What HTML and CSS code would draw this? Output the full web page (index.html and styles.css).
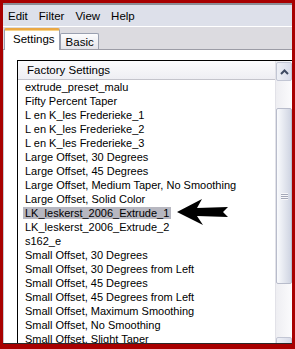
FILE: index.html
```html
<!DOCTYPE html>
<html lang="en">
<head>
    <meta charset="UTF-8">
    <title>Extrude Presets</title>
    <link rel="stylesheet" href="styles.css">
</head>
<body>
    <div class="window">
        <div class="menubar">
            <span class="menu-item">Edit</span>
            <span class="menu-item">Filter</span>
            <span class="menu-item">View</span>
            <span class="menu-item">Help</span>
        </div>
        <div class="tabstrip">
            <div class="tab active">Settings</div>
            <div class="tab">Basic</div>
        </div>
        <div class="panel">
            <div class="listbox">
                <div class="list">
                    <div class="list-head">Factory Settings</div>
                    <ul class="items">
                        <li><span>extrude_preset_malu</span></li>
                        <li><span>Fifty Percent Taper</span></li>
                        <li><span>L en K_les Frederieke_1</span></li>
                        <li><span>L en K_les Frederieke_2</span></li>
                        <li><span>L en K_les Frederieke_3</span></li>
                        <li><span>Large Offset, 30 Degrees</span></li>
                        <li><span>Large Offset, 45 Degrees</span></li>
                        <li><span>Large Offset, Medium Taper, No Smoothing</span></li>
                        <li><span>Large Offset, Solid Color</span></li>
                        <li class="selected"><span>LK_leskerst_2006_Extrude_1</span></li>
                        <li><span>LK_leskerst_2006_Extrude_2</span></li>
                        <li><span>s162_e</span></li>
                        <li><span>Small Offset, 30 Degrees</span></li>
                        <li><span>Small Offset, 30 Degrees from Left</span></li>
                        <li><span>Small Offset, 45 Degrees</span></li>
                        <li><span>Small Offset, 45 Degrees from Left</span></li>
                        <li><span>Small Offset, Maximum Smoothing</span></li>
                        <li><span>Small Offset, No Smoothing</span></li>
                        <li><span>Small Offset, Slight Taper</span></li>
                    </ul>
                </div>
                <div class="scrollbar">
                    <div class="sb-btn">
                        <svg width="9" height="6" viewBox="0 0 9 6"><path d="M1 5 L4.5 1.5 L8 5" fill="none" stroke="#3e4a62" stroke-width="2"/></svg>
                    </div>
                    <div class="sb-track">
                        <div class="thumb">
                            <div class="grip"></div>
                        </div>
                    </div>
                    <div class="sb-btn">
                        <svg width="9" height="6" viewBox="0 0 9 6"><path d="M1 1 L4.5 4.5 L8 1" fill="none" stroke="#3e4a62" stroke-width="2"/></svg>
                    </div>
                </div>
                <!-- pointer arrow drawn over the list -->
                <svg class="pointer" width="54" height="28" viewBox="0 0 54 28">
                    <path d="M1 14 L26 1 L21 10 L52 9 L47 14 L52 19 L21 18 L27 27 Z" fill="#000"/>
                </svg>
            </div>
        </div>
    </div>
</body>
</html>
```

FILE: styles.css
```css
body {
    margin: 0;
    background-color: #a80000;
    font-family: "Liberation Sans", Arial, sans-serif;
    font-size: 11px;
    color: #000;
}
.window {
    position: relative;
    display: flex;
    flex-direction: column;
    width: 289px;
    height: 338px;
    margin: 3px 3px 0 3px;
    border-top: 2px solid #8c8e96;
    border-bottom: 1px solid #2a2a2a;
    background-color: #fff;
    overflow: hidden;
}
.menubar {
    flex: none;
    display: flex;
    align-items: center;
    height: 21px;
    padding-left: 5px;
    background-color: #dde0ea;
    border-bottom: 1px solid #fff;
    font-size: 11.5px;
}
.menu-item {
    margin-right: 11px;
}
.tabstrip {
    flex: none;
    display: flex;
    align-items: flex-end;
    height: 22px;
    padding-left: 1px;
    background-color: #dcdbe0;
    border-bottom: 1px solid #9c9ca6;
    font-size: 11.5px;
}
.tab {
    height: 15px;
    padding: 0 4px 0 5px;
    line-height: 16px;
    background: linear-gradient(#fdfdfe, #e3e3ea);
    border: 1px solid #9aa0b0;
    border-bottom: none;
    border-radius: 2px 2px 0 0;
}
.tab.active {
    position: relative;
    height: 20px;
    line-height: 19px;
    padding: 0 4px 0 8px;
    margin-bottom: -1px;
    background: #fff;
    border-color: #9aa0b0;
    border-top: 2px solid #eaa844;
    box-shadow: inset 0 1px 0 #f7d38a;
}
.panel {
    flex: 1;
    min-height: 0;
    padding: 10px 0 0 13px;
    border-left: 1px solid #c8c8d0;
}
.listbox {
    position: relative;
    display: flex;
    height: 300px;
    border-left: 1px solid #000;
    border-top: 1px solid #000;
}
.list {
    flex: 1;
    min-width: 0;
    overflow: hidden;
}
.list-head {
    height: 18px;
    line-height: 19px;
    padding-left: 9px;
    background: linear-gradient(#fbfbfd, #eeeef3);
    border-bottom: 1px solid #c4c4cc;
    font-size: 11.5px;
}
.items {
    list-style: none;
    margin: 0;
    padding: 0;
}
.items li {
    height: 14px;
    line-height: 14px;
    padding-left: 5px;
    white-space: nowrap;
}
.items span {
    padding: 0 2px;
}
.items li.selected span {
    background-color: #b7b7c0;
}
.scrollbar {
    flex: none;
    display: flex;
    flex-direction: column;
    width: 16px;
    background: linear-gradient(90deg, #eeeef2, #fbfbfd);
    border-left: 1px solid #e2e2e8;
}
.sb-btn {
    flex: none;
    display: flex;
    align-items: center;
    justify-content: center;
    height: 17px;
    margin: 1px 0 0 0;
    background: linear-gradient(90deg, #eef0f6, #d8dcea);
    border: 1px solid #c2c6d4;
    border-radius: 2px;
}
.sb-track {
    flex: none;
    height: 255px;
}
.thumb {
    display: flex;
    align-items: center;
    justify-content: center;
    height: 174px;
    margin: 27px 0 0 0;
    background: linear-gradient(90deg, #fafbfd, #cfd4e2);
    border: 1px solid #b8bccb;
    border-radius: 2px;
}
.grip {
    width: 7px;
    height: 7px;
    background: repeating-linear-gradient(#f8f8fa 0, #f8f8fa 1px, #a4a8b8 1px, #a4a8b8 2px);
}
.pointer {
    position: absolute;
    left: 158px;
    top: 137px;
}
```
